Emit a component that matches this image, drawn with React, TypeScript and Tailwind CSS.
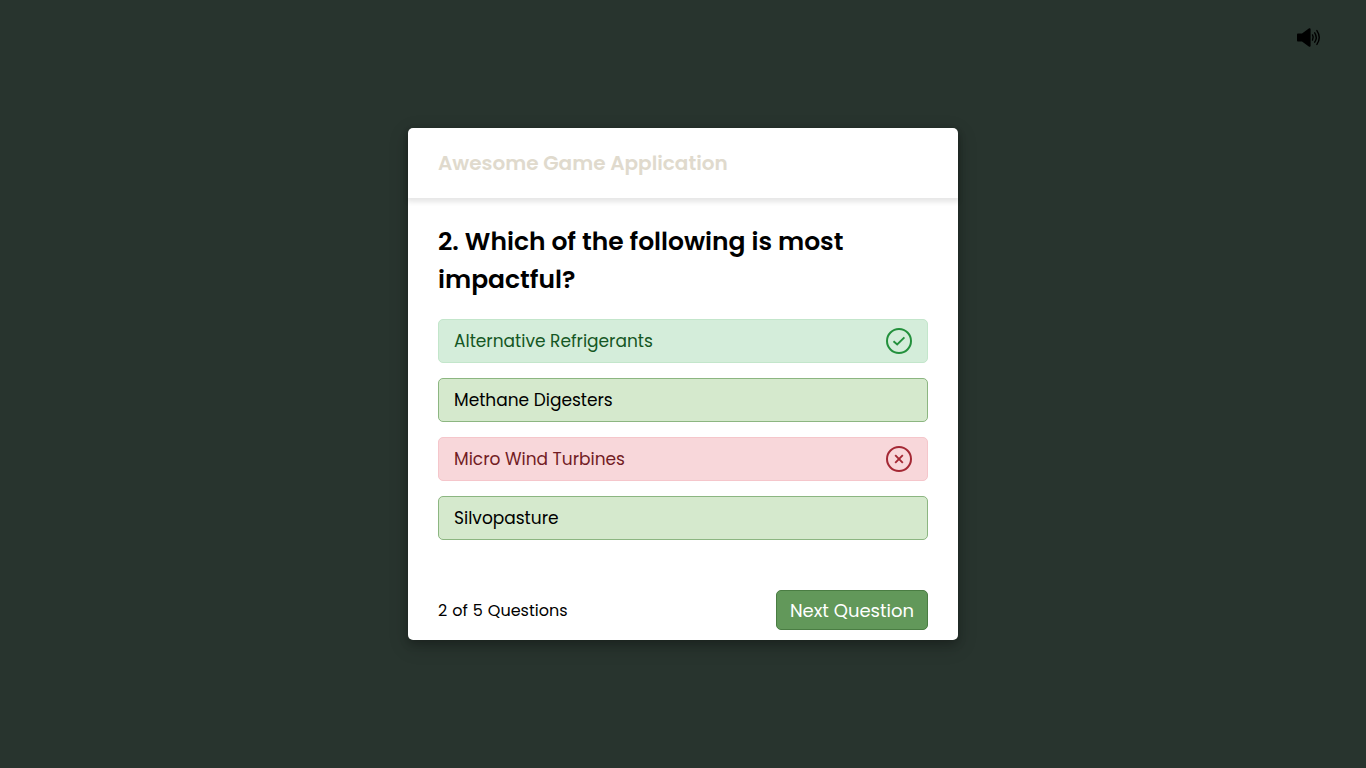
import clsx from 'clsx';

type Status = 'correct' | 'incorrect' | 'idle';

interface OptionProps {
  label: string;
  status: Status;
}

const options: OptionProps[] = [
  { label: 'Alternative Refrigerants', status: 'correct' },
  { label: 'Methane Digesters', status: 'idle' },
  { label: 'Micro Wind Turbines', status: 'incorrect' },
  { label: 'Silvopasture', status: 'idle' },
];

function SpeakerIcon() {
  return (
    <svg width="24" height="20" viewBox="0 0 24 20" aria-hidden="true">
      <path
        fill="currentColor"
        d="M1.2 5.5H5L11.8 .6C12.8 -.1 13.6 .3 13.6 1.2V17.8C13.6 18.7 12.8 19.1 11.8 18.4L5 13.5H1.2C.4 13.5 0 13.1 0 12.3V6.7C0 5.9.4 5.5 1.2 5.5Z"
      />
      <g fill="none" stroke="currentColor" strokeWidth="1.4" strokeLinecap="round">
        <path d="M15.5 6.9Q17.1 9.5 15.5 12.1" />
        <path d="M17.7 4.8Q20.8 9.5 17.7 14.2" />
        <path d="M19.9 2.6Q24.6 9.5 19.9 16.4" />
      </g>
    </svg>
  );
}

function CheckIcon() {
  return (
    <svg width="14" height="14" viewBox="0 0 14 14" fill="none" stroke="currentColor" strokeWidth="1.9" aria-hidden="true">
      <path d="M1.5 7.2L5.2 10.5L12.4 3.3" />
    </svg>
  );
}

function CrossIcon() {
  return (
    <svg width="14" height="14" viewBox="0 0 14 14" fill="none" stroke="currentColor" strokeWidth="1.9" aria-hidden="true">
      <path d="M3.2 3.2L10.8 10.8M10.8 3.2L3.2 10.8" />
    </svg>
  );
}

function Option({ label, status }: OptionProps) {
  return (
    <button
      type="button"
      className={clsx(
        'flex h-11 w-full items-center justify-between rounded-[5px] border px-[15px] text-left text-[17px] leading-[27px]',
        status === 'correct' && 'border-[#c3e6cb] bg-[#d4edda] text-[#155724]',
        status === 'incorrect' && 'border-[#f5c6cb] bg-[#f8d7da] text-[#721c24]',
        status === 'idle' && 'border-[#8cb681] bg-[#d5e9cd] text-black',
      )}
    >
      <span>{label}</span>
      {status === 'correct' && (
        <span className="flex size-[26px] items-center justify-center rounded-full border-2 border-[#23903c] text-[#23903c]">
          <CheckIcon />
        </span>
      )}
      {status === 'incorrect' && (
        <span className="flex size-[26px] items-center justify-center rounded-full border-2 border-[#a42834] text-[#a42834]">
          <CrossIcon />
        </span>
      )}
    </button>
  );
}

export default function App() {
  return (
    <div className="relative flex min-h-screen items-center justify-center bg-[#28342e] font-['Poppins','Inter',sans-serif] text-black antialiased">
      <button type="button" aria-label="Toggle sound" className="absolute top-7 right-[45px]">
        <SpeakerIcon />
      </button>
      <main className="w-full max-w-[550px] rounded-[5px] bg-white shadow-[0_4px_8px_0_rgba(0,0,0,0.2),0_6px_20px_0_rgba(0,0,0,0.19)]">
        <header className="flex h-[70px] items-center rounded-t-[5px] px-[30px] shadow-[0_3px_5px_1px_rgba(0,0,0,0.1)]">
          <h1 className="text-xl font-semibold text-[#e0dacd]">Awesome Game Application</h1>
        </header>
        <section className="px-[30px] pt-[25px] pb-[30px]">
          <h2 className="text-[25px] leading-[38px] font-semibold">
            2. Which of the following is most impactful?
          </h2>
          <div className="mt-5 flex flex-col gap-[15px]">
            {options.map((option) => (
              <Option key={option.label} {...option} />
            ))}
          </div>
        </section>
        <footer className="flex items-center justify-between px-[30px] pt-5 pb-[10px]">
          <p className="flex gap-[5px] text-base leading-[27px]">
            <span>2</span>
            <span>of</span>
            <span>5</span>
            <span>Questions</span>
          </p>
          <button
            type="button"
            className="h-10 rounded-[5px] border border-[#4a7d43] bg-[#62985a] px-[13px] text-lg leading-[27px] text-white"
          >
            Next Question
          </button>
        </footer>
      </main>
    </div>
  );
}
